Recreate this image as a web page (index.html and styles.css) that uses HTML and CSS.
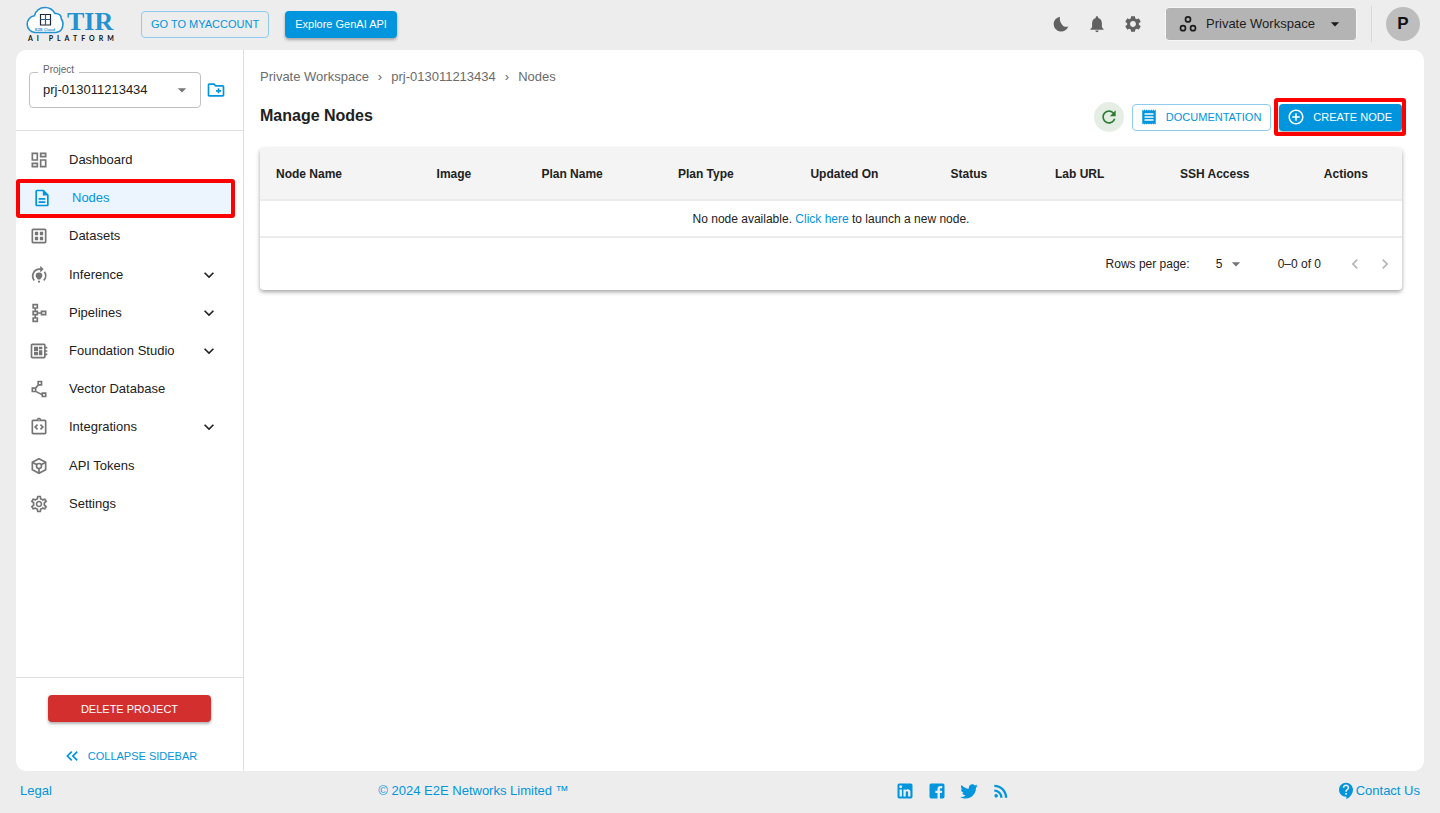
FILE: index.html
```html
<!DOCTYPE html>
<html lang="en">
<head>
<meta charset="utf-8">
<meta name="viewport" content="width=device-width, initial-scale=1">
<title>Manage Nodes - TIR AI Platform</title>
<link rel="stylesheet" href="styles.css">
</head>
<body>
<div class="app">
  <header class="topbar">
    <a class="logo" href="#" aria-label="TIR AI Platform">
      <svg class="logo-art" viewBox="0 0 90 38">
        <path d="M9 27.500a8.400 8.400 0 0 1-.6-16.700C10 5.500 14 2.500 19 2.500c4.500 0 8 2.300 10 6 4.300-.3 6.300 2.200 6.300 5.300 3.300 5.200 1.500 13.700-5.800 13.700z" fill="#fff" stroke="#2492d1" stroke-width="1.600"/>
        <path d="M14.500 9.500h10V20h-10z" fill="none" stroke="#1c2733" stroke-width="1.200"/>
        <path d="M14.500 14.500h10M19.500 9.500V20" fill="none" stroke="#2c5f7f" stroke-width="1.200"/>
        <text class="logo-tiny" x="19" y="26" text-anchor="middle">E2E Cloud</text>
        <text class="logo-name" x="41" y="25">TIR</text>
        <text class="logo-sub" x="2" y="36">AI PLATFORM</text>
      </svg>
    </a>
    <button class="btn btn-outline">GO TO MYACCOUNT</button>
    <button class="btn btn-solid">Explore GenAI API</button>
    <div class="topbar-tools">
      <button class="icon-btn" aria-label="Dark mode"><svg class="icon" viewBox="0 0 24 24"><path d="M10.500 2.200a10 10 0 1 0 11.300 12.700 6.200 6.200 0 0 1-8.500-2.300c-2.300-3-3.300-6.600-2.800-10.400z"/></svg></button>
      <button class="icon-btn" aria-label="Notifications"><svg class="icon" viewBox="1 1 22 22"><path d="M12 22c1.100 0 2-.9 2-2h-4c0 1.100.9 2 2 2zm6-6v-5c0-3.070-1.630-5.640-4.500-6.320V4c0-.83-.67-1.500-1.500-1.500s-1.500.67-1.500 1.500v.68C7.640 5.360 6 7.920 6 11v5l-2 2v1h16v-1l-2-2z"/></svg></button>
      <button class="icon-btn" aria-label="Preferences"><svg class="icon" viewBox="1 1 22 22"><path d="M19.140 12.940c.04-.3.060-.61.060-.94 0-.32-.02-.64-.07-.94l2.030-1.580c.18-.14.230-.41.120-.61l-1.920-3.320c-.12-.22-.37-.29-.59-.22l-2.390.96c-.5-.38-1.030-.7-1.620-.94l-.36-2.540c-.04-.24-.24-.41-.48-.41h-3.840c-.24 0-.43.170-.47.410l-.36 2.540c-.59.240-1.130.570-1.620.940l-2.390-.96c-.22-.08-.47 0-.59.220L2.740 8.870c-.12.210-.08.470.120.610l2.030 1.580c-.05.300-.09.630-.09.940s.02.640.070.940l-2.030 1.580c-.18.140-.23.410-.12.610l1.920 3.320c.12.220.37.290.59.220l2.390-.96c.5.380 1.030.7 1.620.940l.36 2.540c.05.240.24.410.48.410h3.840c.24 0 .44-.17.47-.41l.36-2.540c.59-.24 1.130-.56 1.620-.94l2.390.96c.22.080.47 0 .59-.22l1.920-3.320c.12-.22.070-.47-.12-.61l-2.010-1.580zM12 15.600c-1.980 0-3.600-1.620-3.600-3.600s1.620-3.600 3.600-3.600 3.600 1.620 3.600 3.600-1.620 3.600-3.600 3.600z"/></svg></button>
      <div class="workspace">
        <svg class="icon workspace-icon" viewBox="0 0 24 24"><g fill="none" stroke="currentColor" stroke-width="2"><circle cx="6" cy="17" r="3"/><circle cx="12" cy="6.500" r="3"/><circle cx="18" cy="17" r="3"/></g></svg>
        <select class="workspace-select" aria-label="Workspace"><option>Private Workspace</option></select>
        <svg class="icon workspace-arrow" viewBox="0 0 24 24"><path d="m7 10 5 5 5-5z"/></svg>
      </div>
      <span class="divider"></span>
      <button class="avatar" aria-label="Profile">P</button>
    </div>
  </header>

  <div class="panel">
    <aside class="sidebar">
      <div class="project">
        <div class="project-field">
          <label class="project-label" for="project">Project</label>
          <select class="project-select" id="project"><option>prj-013011213434</option></select>
          <svg class="icon project-arrow" viewBox="0 0 24 24"><path d="m7 10 5 5 5-5z"/></svg>
        </div>
        <button class="icon-btn link-color" aria-label="New project"><svg class="icon" viewBox="0 0 24 24"><path d="M20 6h-8l-2-2H4c-1.110 0-1.990.89-1.990 2L2 18c0 1.110.89 2 2 2h16c1.110 0 2-.89 2-2V8c0-1.110-.89-2-2-2zm0 12H4V6h5.170l2 2H20v10zm-8-4h2v2h2v-2h2v-2h-2v-2h-2v2h-2v2z"/></svg></button>
      </div>
      <nav class="nav">
        <a class="nav-item" href="#"><svg class="icon" viewBox="0 0 24 24"><path d="M19 5v2h-4V5h4M9 5v6H5V5h4m10 8v6h-4v-6h4M9 17v2H5v-2h4M21 3h-8v6h8V3zM11 3H3v10h8V3zm10 8h-8v10h8V11zm-10 4H3v6h8v-6z"/></svg><span>Dashboard</span></a>
        <a class="nav-item nav-active" href="#" aria-current="page"><svg class="icon" viewBox="0 0 24 24"><path d="M8 16h8v2H8zm0-4h8v2H8zm6-10H6c-1.100 0-2 .9-2 2v16c0 1.100.89 2 1.990 2H18c1.100 0 2-.9 2-2V8l-6-6zm4 18H6V4h7v5h5v11z"/></svg><span>Nodes</span></a>
        <a class="nav-item" href="#"><svg class="icon" viewBox="0 0 24 24"><path d="M19 3H5c-1.100 0-2 .9-2 2v14c0 1.100.9 2 2 2h14c1.100 0 2-.9 2-2V5c0-1.100-.9-2-2-2zm0 16H5V5h14v14zM7 7h4v4H7zm6 0h4v4h-4zm-6 6h4v4H7zm6 0h4v4h-4z"/></svg><span>Datasets</span></a>
        <a class="nav-item" href="#"><svg class="icon" viewBox="0 0 24 24"><path d="M6.300 18.500A8.300 8.300 0 0 1 12.500 5H15M18.500 8a8.300 8.300 0 0 1-.8 10.500" fill="none" stroke="currentColor" stroke-width="2"/><path d="m13.500 1 4 4-4 4zM12 9a4 4 0 0 1 4 4c0 2-1.700 3-2.500 4.500h-3C9.700 16 8 15 8 13a4 4 0 0 1 4-4zm-1.200 10h2.400v2h-2.400z"/></svg><span>Inference</span><svg class="icon chevron" viewBox="0 0 24 24"><path d="M7.410 8.590 12 13.170l4.590-4.580L18 10l-6 6-6-6z"/></svg></a>
        <a class="nav-item" href="#"><svg class="icon" viewBox="0 0 24 24"><path d="M14 9v2h-3V9H8.500V7H11V1H4v6h2.500v2H4v6h2.500v2H4v6h7v-6H8.500v-2H11v-2h3v2h7V9h-7zM6 3h3v2H6V3zm3 18H6v-2h3v2zm0-8H6v-2h3v2zm10 0h-3v-2h3v2z"/></svg><span>Pipelines</span><svg class="icon chevron" viewBox="0 0 24 24"><path d="M7.410 8.590 12 13.170l4.590-4.580L18 10l-6 6-6-6z"/></svg></a>
        <a class="nav-item" href="#"><svg class="icon" viewBox="0 0 24 24"><path d="M22 9V7h-2V5c0-1.100-.9-2-2-2H4c-1.100 0-2 .9-2 2v14c0 1.100.9 2 2 2h14c1.100 0 2-.9 2-2v-2h2v-2h-2v-2h2v-2h-2V9h2zm-4 10H4V5h14v14zM6 13h5v4H6zm6-6h4v3h-4zM6 7h5v5H6zm6 4h4v6h-4z"/></svg><span>Foundation Studio</span><svg class="icon chevron" viewBox="0 0 24 24"><path d="M7.410 8.590 12 13.170l4.590-4.580L18 10l-6 6-6-6z"/></svg></a>
        <a class="nav-item" href="#"><svg class="icon" viewBox="0 0 24 24"><path d="M15 16v1.260l-6-3v-3.170L11.700 8H16V2h-6v4.900L7.300 10H3v6h5l7 3.500V22h6v-6h-6zM12 4h2v2h-2V4zM7 14H5v-2h2v2zm12 6h-2v-2h2v2z"/></svg><span>Vector Database</span></a>
        <a class="nav-item" href="#"><svg class="icon" viewBox="0 0 24 24"><path d="M11 14.170 8.830 12 11 9.830 9.590 8.410 6 12l3.590 3.590zm3.410 1.420L18 12l-3.590-3.590L13 9.830 15.170 12 13 14.170zM19 3h-4.180C14.400 1.840 13.300 1 12 1s-2.400.84-2.820 2H5c-1.100 0-2 .9-2 2v14c0 1.100.9 2 2 2h14c1.100 0 2-.9 2-2V5c0-1.100-.9-2-2-2zm-7-.25c.41 0 .75.340.75.750s-.34.750-.75.750-.75-.34-.75-.75.340-.75.750-.75zM19 19H5V5h14v14z"/></svg><span>Integrations</span><svg class="icon chevron" viewBox="0 0 24 24"><path d="M7.410 8.590 12 13.170l4.590-4.580L18 10l-6 6-6-6z"/></svg></a>
        <a class="nav-item" href="#"><svg class="icon" viewBox="0 0 24 24"><g fill="none" stroke="currentColor" stroke-width="2"><path d="m12 3.200 8 4.400v8.800l-8 4.400-8-4.400V7.600z"/><circle cx="12" cy="12" r="3"/><path d="m4 7.600 5.400 3M20 7.600l-5.400 3M12 15v5.800"/></g></svg><span>API Tokens</span></a>
        <a class="nav-item" href="#"><svg class="icon" viewBox="0 0 24 24"><path d="M19.430 12.980c.04-.32.070-.64.070-.98 0-.34-.03-.66-.07-.98l2.110-1.650c.19-.15.240-.42.120-.64l-2-3.460c-.09-.16-.26-.25-.44-.25-.06 0-.12.010-.17.030l-2.490 1c-.52-.4-1.080-.73-1.690-.98l-.38-2.650C14.460 2.180 14.250 2 14 2h-4c-.25 0-.46.180-.49.420l-.38 2.650c-.61.250-1.170.590-1.690.980l-2.490-1c-.06-.02-.12-.03-.18-.03-.17 0-.34.090-.43.250l-2 3.460c-.13.220-.07.490.120.640l2.110 1.650c-.04.320-.07.650-.07.980 0 .33.030.66.070.980l-2.110 1.650c-.19.150-.24.420-.12.640l2 3.460c.09.160.26.250.44.250.06 0 .12-.01.170-.03l2.490-1c.52.400 1.080.73 1.690.980l.38 2.650c.03.240.24.420.49.420h4c.25 0 .46-.18.490-.42l.38-2.650c.61-.25 1.170-.59 1.690-.98l2.490 1c.06.020.12.030.18.030.17 0 .34-.09.430-.25l2-3.460c.12-.22.070-.49-.12-.64l-2.110-1.650zm-1.980-1.710c.04.310.050.52.050.73 0 .21-.02.430-.05.730l-.14 1.130.89.700 1.080.840-.7 1.210-1.270-.51-1.040-.42-.9.680c-.43.320-.84.560-1.250.730l-1.060.430-.16 1.130-.2 1.350h-1.400l-.19-1.350-.16-1.130-1.060-.43c-.43-.18-.83-.41-1.230-.71l-.91-.7-1.060.430-1.270.510-.7-1.210 1.080-.84.890-.7-.14-1.130c-.03-.31-.05-.54-.05-.74s.02-.43.050-.73l.14-1.130-.89-.7-1.080-.84.700-1.210 1.270.510 1.040.420.900-.68c.43-.32.840-.56 1.250-.73l1.060-.43.160-1.130.2-1.350h1.390l.19 1.350.16 1.130 1.060.430c.43.180.83.410 1.230.710l.91.700 1.060-.43 1.270-.51.700 1.210-1.070.850-.89.700.14 1.130zM12 8c-2.210 0-4 1.790-4 4s1.790 4 4 4 4-1.790 4-4-1.790-4-4-4zm0 6c-1.100 0-2-.9-2-2s.9-2 2-2 2 .9 2 2-.9 2-2 2z"/></svg><span>Settings</span></a>
      </nav>
      <div class="sidebar-foot">
        <button class="btn btn-danger">DELETE PROJECT</button>
        <button class="btn btn-text"><svg class="icon" viewBox="0 0 24 24"><path d="M17.590 18 19 16.590 14.420 12 19 7.410 17.590 6l-6 6zM11 18l1.410-1.410L7.830 12l4.580-4.590L11 6l-6 6z"/></svg>COLLAPSE SIDEBAR</button>
      </div>
    </aside>

    <main class="main">
      <nav class="crumbs" aria-label="Breadcrumb"><a href="#">Private Workspace</a><span>›</span><a href="#">prj-013011213434</a><span>›</span><a href="#">Nodes</a></nav>
      <div class="title-row">
        <h1 class="title">Manage Nodes</h1>
        <div class="actions">
          <button class="refresh" aria-label="Refresh"><svg class="icon" viewBox="0 0 24 24"><path d="M17.650 6.350C16.200 4.900 14.210 4 12 4c-4.420 0-7.990 3.580-7.990 8s3.570 8 7.990 8c3.730 0 6.840-2.550 7.730-6h-2.080c-.82 2.330-3.040 4-5.650 4-3.310 0-6-2.690-6-6s2.690-6 6-6c1.660 0 3.140.69 4.220 1.780L13 11h7V4l-2.350 2.350z"/></svg></button>
          <button class="btn btn-icon btn-outline"><svg class="icon" viewBox="0 0 24 24"><path d="M18 17H6v-2h12v2zm0-4H6v-2h12v2zm0-4H6V7h12v2zM3 22l1.500-1.500L6 22l1.500-1.500L9 22l1.500-1.500L12 22l1.500-1.500L15 22l1.500-1.500L18 22l1.500-1.500L21 22V2l-1.500 1.500L18 2l-1.500 1.500L15 2l-1.500 1.500L12 2l-1.500 1.500L9 2 7.500 3.500 6 2 4.500 3.500 3 2v20z"/></svg>DOCUMENTATION</button>
          <div class="marked">
            <button class="btn btn-icon btn-solid"><svg class="icon" viewBox="0 0 24 24"><path d="M13 7h-2v4H7v2h4v4h2v-4h4v-2h-4V7zm-1-5C6.480 2 2 6.480 2 12s4.480 10 10 10 10-4.480 10-10S17.520 2 12 2zm0 18c-4.410 0-8-3.590-8-8s3.590-8 8-8 8 3.590 8 8-3.590 8-8 8z"/></svg>CREATE NODE</button>
          </div>
        </div>
      </div>
      <section class="card">
        <table class="table">
          <thead><tr><th>Node Name</th><th>Image</th><th>Plan Name</th><th>Plan Type</th><th>Updated On</th><th>Status</th><th>Lab URL</th><th>SSH Access</th><th>Actions</th></tr></thead>
          <tbody><tr><td colspan="9">No node available. <a href="#">Click here</a> to launch a new node.</td></tr></tbody>
        </table>
        <div class="pager">
          <label for="rows">Rows per page:</label>
          <div class="rows-field">
            <select class="rows-select" id="rows"><option>5</option></select>
            <svg class="icon rows-arrow" viewBox="0 0 24 24"><path d="m7 10 5 5 5-5z"/></svg>
          </div>
          <span class="range">0–0 of 0</span>
          <button class="page-btn" disabled aria-label="Previous page"><svg class="icon" viewBox="0 0 24 24"><path d="M15.410 7.410 14 6l-6 6 6 6 1.410-1.410L10.830 12z"/></svg></button>
          <button class="page-btn" disabled aria-label="Next page"><svg class="icon" viewBox="0 0 24 24"><path d="M8.590 16.590 13.170 12 8.590 7.410 10 6l6 6-6 6z"/></svg></button>
        </div>
      </section>
    </main>
  </div>

  <footer class="footer">
    <a href="#">Legal</a>
    <a href="#">© 2024 E2E Networks Limited ™</a>
    <div class="social">
      <a href="#" aria-label="LinkedIn"><svg class="icon" viewBox="0 0 24 24"><path d="M19 3a2 2 0 0 1 2 2v14a2 2 0 0 1-2 2H5a2 2 0 0 1-2-2V5a2 2 0 0 1 2-2h14m-.5 15.500v-5.300a3.260 3.260 0 0 0-3.260-3.260c-.85 0-1.840.52-2.320 1.300v-1.110h-2.790v8.370h2.790v-4.930c0-.77.62-1.400 1.390-1.400a1.400 1.400 0 0 1 1.400 1.400v4.930h2.790M6.880 8.560a1.680 1.680 0 0 0 1.680-1.680c0-.93-.75-1.690-1.680-1.690a1.690 1.690 0 0 0-1.690 1.690c0 .93.76 1.680 1.690 1.680m1.390 9.940v-8.370H5.500v8.370h2.770z"/></svg></a>
      <a href="#" aria-label="Facebook"><svg class="icon" viewBox="0 0 24 24"><path d="M5 3h14a2 2 0 0 1 2 2v14a2 2 0 0 1-2 2h-3.500v-6.500h2.300l.4-2.800h-2.700V10c0-.9.400-1.400 1.400-1.400h1.400V6.100c-.5-.1-1.200-.2-2-.2-2.300 0-3.700 1.300-3.700 3.700v2.100H10v2.800h2.600V21H5a2 2 0 0 1-2-2V5a2 2 0 0 1 2-2z"/></svg></a>
      <a href="#" aria-label="Twitter"><svg class="icon" viewBox="0 0 24 24"><path d="M22.460 6c-.77.350-1.600.58-2.460.69.880-.53 1.560-1.370 1.880-2.380-.83.500-1.750.85-2.720 1.050C18.370 4.500 17.260 4 16 4c-2.350 0-4.270 1.920-4.270 4.290 0 .34.040.67.110.98C8.280 9.090 5.110 7.380 3 4.790c-.37.630-.58 1.370-.58 2.150 0 1.490.75 2.810 1.910 3.560-.71 0-1.370-.2-1.950-.5v.03c0 2.080 1.480 3.820 3.440 4.210a4.220 4.220 0 0 1-1.930.07 4.280 4.280 0 0 0 4 2.980 8.521 8.521 0 0 1-5.330 1.840c-.34 0-.68-.02-1.020-.06C3.440 20.290 5.700 21 8.120 21 16 21 20.330 14.460 20.330 8.790c0-.19 0-.37-.01-.56.84-.6 1.560-1.360 2.140-2.230z"/></svg></a>
      <a href="#" aria-label="RSS"><svg class="icon" viewBox="0 0 24 24"><circle cx="6.180" cy="17.820" r="2.180"/><path d="M4 4.440v2.830c7.030 0 12.730 5.700 12.730 12.730h2.830c0-8.590-6.970-15.560-15.560-15.560zm0 5.660v2.830c3.900 0 7.070 3.170 7.070 7.070h2.830c0-5.470-4.430-9.900-9.900-9.900z"/></svg></a>
    </div>
    <a class="contact" href="#"><svg class="icon" viewBox="2 1 19 22"><path d="M11.500 2C6.810 2 3 5.810 3 10.500S6.810 19 11.500 19h.5v3c4.860-2.340 8-7 8-11.500C20 5.810 16.190 2 11.500 2zm1 14.500h-2v-2h2v2zm0-3.500h-2c0-3.250 3-3 3-5 0-1.100-.9-2-2-2s-2 .9-2 2h-2c0-2.210 1.790-4 4-4s4 1.790 4 4c0 2.500-3 2.750-3 5z"/></svg>Contact Us</a>
  </footer>
</div>
</body>
</html>
```

FILE: styles.css
```css
:root {
  --blue: #0095dd;
  --text: #212121;
  --muted: #6b6b6b;
  --line: #dedede;
  --mark: #fd0000;
}

* { box-sizing: border-box; }

body {
  margin: 0;
  background: #ededed;
  color: var(--text);
  font: 13px/20px "Liberation Sans", Arial, sans-serif;
}

a { color: inherit; text-decoration: none; }

button, select { font: inherit; color: inherit; cursor: pointer; }

button {
  display: inline-flex;
  align-items: center;
  justify-content: center;
  padding: 0;
  border: 0;
  background: none;
}

select {
  appearance: none;
  margin: 0;
  border: 0;
  background: none;
}

.icon {
  display: block;
  flex: none;
  width: 20px;
  height: 20px;
  fill: currentColor;
}

.app {
  display: flex;
  flex-direction: column;
  min-height: 100vh;
}

/* Buttons */

.btn {
  height: 27px;
  padding: 0 10px;
  border-radius: 4px;
  font-size: 11px;
  line-height: 18px;
  white-space: nowrap;
}

.btn-outline {
  border: 1px solid #8dccef;
  padding: 0 9px;
  color: var(--blue);
}

.btn-solid {
  background: var(--blue);
  color: #fff;
  box-shadow: 0 2px 3px rgba(0, 0, 0, .3);
}

.btn-danger {
  width: 163px;
  background: #d32f2f;
  color: #fff;
  box-shadow: 0 2px 3px rgba(0, 0, 0, .3);
}

.btn-text {
  gap: 6px;
  color: var(--blue);
}

.btn-icon {
  gap: 8px;
  padding: 0 10px 0 8px;
}

.btn-icon.btn-outline { padding: 0 9px 0 7px; }

.btn-icon .icon { width: 18px; height: 18px; }

.icon-btn { color: #616161; }

.link-color { color: var(--blue); }

/* Header */

.topbar {
  display: flex;
  align-items: center;
  gap: 16px;
  height: 50px;
  padding: 0 20px 2px 26px;
}

.logo { margin-right: 9px; }

.logo-art {
  display: block;
  width: 90px;
  height: 38px;
}

.logo-name { font: bold 26px "Liberation Serif", serif; fill: #2492d1; }
.logo-sub { font: bold 7px Lato, sans-serif; letter-spacing: 4px; fill: #111; }
.logo-tiny { font: bold 4px "Liberation Sans", sans-serif; fill: #2492d1; }

.topbar-tools {
  display: flex;
  align-items: center;
  gap: 16px;
  margin-left: auto;
}

.topbar-tools .icon-btn { width: 20px; }

.topbar-tools .icon-btn .icon { width: 18px; height: 18px; }

.workspace {
  position: relative;
  display: flex;
  align-items: center;
  margin-left: 6px;
  color: #1c1c1c;
}

.workspace-select {
  width: 192px;
  height: 34px;
  padding: 0 36px 0 40px;
  border: 1px solid #f7f7f7;
  border-radius: 4px;
  background: #b4b4b4;
}

.workspace-icon, .workspace-arrow {
  position: absolute;
  pointer-events: none;
}

.workspace-icon { left: 13px; }
.workspace-arrow { right: 12px; }

.divider {
  width: 1px;
  height: 36px;
  margin: 0 -2px;
  background: #d8d8d8;
}

.avatar {
  width: 34px;
  height: 34px;
  border-radius: 50%;
  background: #bdbdbd;
  font-size: 17px;
  font-weight: bold;
  color: #111;
}

/* Panel and sidebar */

.panel {
  display: flex;
  flex: 1;
  margin: 0 16px;
  border-radius: 10px;
  background: #fff;
}

.sidebar {
  display: flex;
  flex: none;
  flex-direction: column;
  width: 228px;
  border-right: 1px solid var(--line);
}

.project {
  display: flex;
  align-items: center;
  gap: 5px;
  padding: 22px 17px 22px 13px;
  border-bottom: 1px solid var(--line);
}

.project-field {
  position: relative;
  display: flex;
  align-items: center;
  flex: 1;
}

.project-select {
  width: 100%;
  height: 36px;
  padding: 0 32px 0 13px;
  border: 1px solid #c0c0c0;
  border-radius: 4px;
}

.project-label {
  position: absolute;
  top: -8px;
  left: 9px;
  padding: 0 5px;
  background: #fff;
  color: #666;
  font-size: 10px;
  line-height: 12px;
}

.project-arrow {
  position: absolute;
  right: 9px;
  color: #757575;
  pointer-events: none;
}

.nav {
  display: grid;
  grid-auto-rows: 1fr;
  min-height: 382px;
  margin: 10px 8px 0 0;
}

.nav-item {
  display: flex;
  align-items: center;
  gap: 20px;
  padding: 0 16px 0 13px;
}

.nav-item .icon { color: #757575; }

.nav-item .chevron {
  margin-left: auto;
  color: var(--text);
}

.nav-active {
  position: relative;
  padding-left: 16px;
  background: #ecf5fd;
  color: var(--blue);
}

.nav-active .icon { color: inherit; }

.nav-active::after, .marked::after {
  content: "";
  position: absolute;
  border: 4px solid var(--mark);
  border-radius: 3px;
  pointer-events: none;
}

.nav-active::after { inset: 0 0 -1px; }

.sidebar-foot {
  display: flex;
  flex-direction: column;
  align-items: center;
  gap: 20px;
  margin-top: auto;
  padding: 17px 0 2px;
  border-top: 1px solid var(--line);
}

/* Main */

.main {
  flex: 1;
  min-width: 0;
  padding: 17px 22px 16px 16px;
}

.crumbs {
  display: flex;
  gap: 9px;
  color: var(--muted);
}

.title-row {
  display: flex;
  align-items: center;
  justify-content: space-between;
  margin-top: 15px;
}

.title {
  margin: 0;
  padding-bottom: 2px;
  font-size: 16px;
  line-height: 24px;
}

.actions {
  display: flex;
  align-items: center;
  gap: 8px;
}

.refresh {
  width: 30px;
  height: 30px;
  border-radius: 50%;
  background: #e4eee5;
  color: #2e7d32;
}

.marked { position: relative; display: flex; }
.marked::after { inset: -6px -4px -5px -5px; }

.card {
  margin-top: 16px;
  overflow: hidden;
  border-radius: 4px;
  box-shadow: 0 2px 4px rgba(0, 0, 0, .36);
}

.table {
  width: 100%;
  border-collapse: separate;
  border-spacing: 0;
  font-size: 12px;
}

.table th {
  padding: 16px 16px 15px;
  border-bottom: 2px solid #ebebeb;
  background: #f4f4f4;
  text-align: center;
}

.table th:first-child { text-align: left; }

.table td {
  padding: 8px 16px 7px;
  border-bottom: 2px solid #ebebeb;
  text-align: center;
}

.table a { color: var(--blue); }

.pager {
  display: flex;
  align-items: center;
  justify-content: flex-end;
  height: 52px;
  padding-right: 7px;
  font-size: 12px;
}

.rows-field {
  position: relative;
  display: flex;
  align-items: center;
  margin: 0 32px 0 18px;
}

.rows-select {
  width: 38px;
  height: 24px;
  padding: 0 22px 0 8px;
}

.rows-arrow {
  position: absolute;
  right: 0;
  color: #757575;
  pointer-events: none;
}

.range { margin-right: 24px; }

.page-btn {
  width: 20px;
  height: 20px;
  color: #b5b5b5;
}

.page-btn + .page-btn { margin-left: 10px; }

/* Footer */

.footer {
  display: flex;
  align-items: center;
  justify-content: space-between;
  height: 42px;
  padding: 0 20px 2px;
  color: var(--blue);
}

.social { display: flex; gap: 12px; }

.contact { display: flex; align-items: center; gap: 2px; }

.contact .icon { width: 16px; height: 18px; }
```
